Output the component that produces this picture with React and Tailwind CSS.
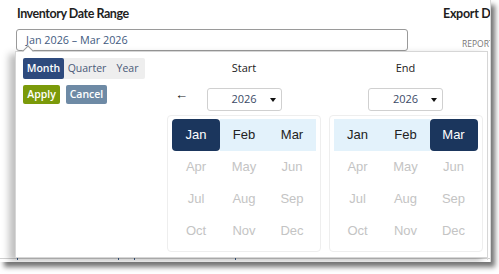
import React from "react";

const months = ["Jan","Feb","Mar","Apr","May","Jun","Jul","Aug","Sep","Oct","Nov","Dec"];

function Grid({ sel }) {
  return (
    <div className="w-[154px] h-[137px] border border-[#eeeeee] rounded-[4px] px-[4px] pt-[3px] grid grid-cols-3 auto-rows-[32px] content-start bg-white">
      {months.map((m, i) => {
        const s = sel(i);
        let cls = "text-[#c4c4c4]";
        if (s === "dark") cls = "bg-[#1b365d] text-white rounded-[4px]";
        if (s === "light") cls = "bg-[#e3f2fb] text-[#222]";
        return (
          <div key={m} className={"flex items-center justify-center text-[13px] " + cls}>
            {m}
          </div>
        );
      })}
    </div>
  );
}

function YearSelect() {
  return (
    <div className="w-[75px] h-[23px] border border-[#d0d0d0] rounded-[3px] flex items-center justify-center relative text-[11px] text-[#3b4a66] font-['Open_Sans',sans-serif]">
      2026
      <svg className="absolute right-[5px] top-[9px]" width="6" height="4" viewBox="0 0 6 4">
        <path d="M0 0 L6 0 L3 4 Z" fill="#111" />
      </svg>
    </div>
  );
}

export default function App() {
  return (
    <div className="w-[499px] h-[274px] bg-white relative overflow-hidden font-['Liberation_Sans',Arial,sans-serif]">
      <div className="w-[491px] h-[262px] bg-white relative overflow-hidden shadow-[4px_5px_5px_rgba(0,0,0,0.55)] border-r border-[#d8d8d8]">
        <div className="flex">
          <div className="w-[426px] pl-[17px] pt-[5px] shrink-0">
            <div className="text-[12.5px] font-bold text-[#1e1e1e] leading-[18px] tracking-[-0.45px] font-['Lato',sans-serif]">Inventory Date Range</div>
            <div className="mt-[6px] ml-[-1px] w-[392px] h-[22px] border border-[#9a9a9a] rounded-[3px] pl-[9px] flex items-center text-[10.8px] text-[#3f5a80] font-['Open_Sans',sans-serif]">
              Jan 2026 – Mar 2026
            </div>
          </div>
          <div className="pl-[17px] pt-[5px] shrink-0 whitespace-nowrap">
            <div className="text-[12.5px] font-bold text-[#1e1e1e] leading-[18px] tracking-[-0.3px] font-['Lato',sans-serif]">Export D</div>
            <div className="mt-[15px] pl-[19px] text-[8.5px] text-[#777] uppercase font-['Open_Sans',sans-serif]">Report</div>
          </div>
        </div>

        <div className="absolute left-0 right-0 top-[258px] h-[4px] border-t border-[#cfcfcf]">
          <div className="absolute left-[17px] top-[-2px] w-[1px] h-[3px] bg-[#3b5b85]" />
          <div className="absolute left-[118px] top-[-2px] w-[1px] h-[3px] bg-[#3b5b85]" />
          <div className="absolute left-[134px] top-[-2px] w-[1px] h-[3px] bg-[#3b5b85]" />
          <div className="absolute left-[235px] top-[-2px] w-[1px] h-[3px] bg-[#3b5b85]" />
        </div>
        <div className="absolute left-[487px] top-[60px] w-[1px] h-[200px] bg-[#dddddd]" />

        <div className="absolute left-[15px] top-[51px] w-[473px] h-[207px] bg-white border border-[#d6d6d6] shadow-[-6px_3px_7px_rgba(0,0,0,0.25)] flex">
          <div className="absolute left-[8px] top-[-5px] w-[8px] h-[8px] bg-white border-l border-t border-[#9a9a9a] rotate-45" />
          <div className="w-[151px] pl-[7px] pt-[6px] shrink-0 font-['Open_Sans',sans-serif]">
            <div className="flex h-[21px] w-[122px] bg-[#eeeeee] rounded-[2px] text-[10.5px]">
              <div className="w-[41px] bg-[#2e4a7d] text-white rounded-[2px] flex items-center justify-center font-semibold">Month</div>
              <div className="w-[46px] text-[#4a5a78] flex items-center justify-center">Quarter</div>
              <div className="w-[35px] text-[#4a5a78] flex items-center justify-center">Year</div>
            </div>
            <div className="flex gap-[6px] mt-[6px] text-[10.5px] text-white font-semibold">
              <div className="w-[37px] h-[19px] bg-[#7b9a0a] rounded-[2px] flex items-center justify-center">Apply</div>
              <div className="w-[41px] h-[19px] bg-[#6e8aa5] rounded-[2px] flex items-center justify-center">Cancel</div>
            </div>
          </div>
          <div className="flex gap-[7px] pt-[8px]">
            <div className="w-[154px] flex flex-col items-center relative">
              <div className="text-[11px] text-[#222] font-['Open_Sans',sans-serif] leading-[15px]">Start</div>
              <div className="mt-[13px]"><YearSelect /></div>
              <div className="absolute left-[8px] top-[28px] text-[13px] font-bold text-[#111] leading-[14px]">←</div>
              <div className="mt-[4px]">
                <Grid sel={(i) => (i === 0 ? "dark" : i < 3 ? "light" : "dis")} />
              </div>
            </div>
            <div className="w-[155px] flex flex-col items-center">
              <div className="text-[11px] text-[#222] font-['Open_Sans',sans-serif] leading-[15px]">End</div>
              <div className="mt-[13px]"><YearSelect /></div>
              <div className="mt-[4px]">
                <Grid sel={(i) => (i === 2 ? "dark" : i < 2 ? "light" : "dis")} />
              </div>
            </div>
          </div>
        </div>
      </div>
    </div>
  );
}
